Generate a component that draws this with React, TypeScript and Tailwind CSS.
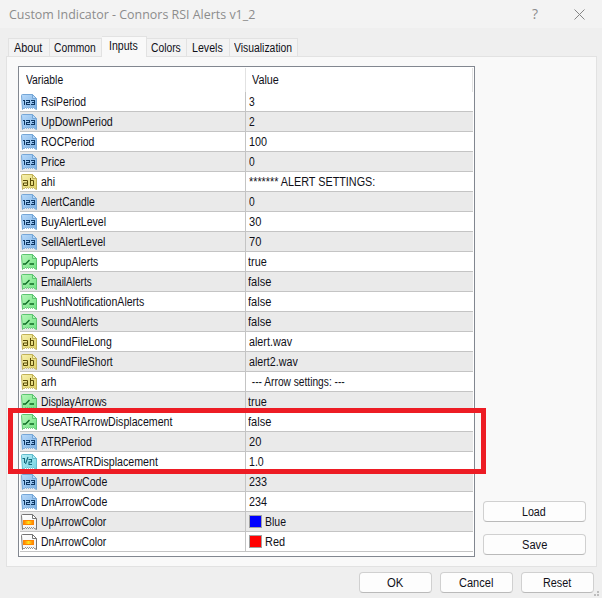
import { useLayoutEffect, useRef, useState } from "react"
import { clsx } from "clsx"

type Kind = "int" | "string" | "bool" | "double" | "color"

type Row = {
  kind: Kind
  name: string
  nameWidth: number
  value: string
  valueWidth: number
  swatch?: string
}

const rows: Row[] = [
  { kind: "int", name: "RsiPeriod", nameWidth: 45, value: "3", valueWidth: 6 },
  { kind: "int", name: "UpDownPeriod", nameWidth: 72, value: "2", valueWidth: 6 },
  { kind: "int", name: "ROCPeriod", nameWidth: 53, value: "100", valueWidth: 18 },
  { kind: "int", name: "Price", nameWidth: 24, value: "0", valueWidth: 6 },
  { kind: "string", name: "ahi", nameWidth: 14, value: "******* ALERT SETTINGS:", valueWidth: 126 },
  { kind: "int", name: "AlertCandle", nameWidth: 54, value: "0", valueWidth: 6 },
  { kind: "int", name: "BuyAlertLevel", nameWidth: 65, value: "30", valueWidth: 12 },
  { kind: "int", name: "SellAlertLevel", nameWidth: 64, value: "70", valueWidth: 12 },
  { kind: "bool", name: "PopupAlerts", nameWidth: 57, value: "true", valueWidth: 19 },
  { kind: "bool", name: "EmailAlerts", nameWidth: 51, value: "false", valueWidth: 23 },
  { kind: "bool", name: "PushNotificationAlerts", nameWidth: 103, value: "false", valueWidth: 23 },
  { kind: "bool", name: "SoundAlerts", nameWidth: 57, value: "false", valueWidth: 23 },
  { kind: "string", name: "SoundFileLong", nameWidth: 71, value: "alert.wav", valueWidth: 43 },
  { kind: "string", name: "SoundFileShort", nameWidth: 72, value: "alert2.wav", valueWidth: 49 },
  { kind: "string", name: "arh", nameWidth: 15, value: " --- Arrow settings: ---", valueWidth: 96 },
  { kind: "bool", name: "DisplayArrows", nameWidth: 66, value: "true", valueWidth: 19 },
  { kind: "bool", name: "UseATRArrowDisplacement", nameWidth: 131, value: "false", valueWidth: 23 },
  { kind: "int", name: "ATRPeriod", nameWidth: 51, value: "20", valueWidth: 12 },
  { kind: "double", name: "arrowsATRDisplacement", nameWidth: 117, value: "1.0", valueWidth: 15 },
  { kind: "int", name: "UpArrowCode", nameWidth: 66, value: "233", valueWidth: 18 },
  { kind: "int", name: "DnArrowCode", nameWidth: 66, value: "234", valueWidth: 18 },
  { kind: "color", name: "UpArrowColor", nameWidth: 65, value: "Blue", valueWidth: 21, swatch: "bg-[#0000ff]" },
  { kind: "color", name: "DnArrowColor", nameWidth: 65, value: "Red", valueWidth: 20, swatch: "bg-[#ff0000]" },
]

const tabs = [
  { label: "About", width: 28, box: "w-[42px]" },
  { label: "Common", width: 42, box: "w-[52px]" },
  { label: "Inputs", width: 29, box: "w-[45px]" },
  { label: "Colors", width: 30, box: "w-[40px]" },
  { label: "Levels", width: 31, box: "w-[43px]" },
  { label: "Visualization", width: 58, box: "w-[68px]" },
]

// Condenses the text horizontally so the label takes exactly `width` pixels
function Label({ text, width }: { text: string; width: number }) {
  const ref = useRef<HTMLSpanElement>(null)
  const [scale, setScale] = useState(1)

  useLayoutEffect(() => {
    if (ref.current) {
      setScale(width / ref.current.offsetWidth)
    }
  }, [])

  return (
    <span className="flex shrink-0" style={{ width }}>
      <span
        ref={ref}
        className="inline-block shrink-0 origin-left whitespace-pre"
        style={{ transform: `scaleX(${scale})` }}
      >
        {text}
      </span>
    </span>
  )
}

const palette = {
  int: { light: "#b9dafa", dark: "#7db1e4", line: "#75a6d6", ink: "#0c3560" },
  string: { light: "#f8f2b0", dark: "#dccf66", line: "#c0b158", ink: "#5a4c08" },
  bool: { light: "#b6f7ba", dark: "#72e082", line: "#5cc470", ink: "#0c6a22" },
  double: { light: "#b8f0f6", dark: "#74d2e2", line: "#62bccd", ink: "#12697c" },
  color: { light: "#ffffff", dark: "#f0f0f0", line: "#747474", ink: "#747474" },
}

function TypeIcon({ kind }: { kind: Kind }) {
  const c = palette[kind]
  return (
    <svg width="16" height="16" viewBox="0 0 16 16" className="mt-[2px] shrink-0">
      <defs>
        <linearGradient id={"g-" + kind} x1="0" y1="0" x2="1" y2="1">
          <stop offset="0" stopColor={c.light} />
          <stop offset="1" stopColor={c.dark} />
        </linearGradient>
        <linearGradient id="g-fire">
          <stop offset="0" stopColor="#ff7800" />
          <stop offset=".5" stopColor="#ffe21a" />
          <stop offset="1" stopColor="#ff7800" />
        </linearGradient>
      </defs>
      <path
        d="M.5 1.500q0-1 1-1h10l4 4V15.500l-2-1-1-1-1 1-1-1-1 1-1-1-1 1-1-1-1 1-1-1-1 1-1 0-1 1z"
        fill={`url(#g-${kind})`}
        stroke={c.line}
      />
      <path d="M11.500.5v4h4z" fill={c.light} stroke={c.line} />
      {kind === "int" && (
        <g fill={c.ink}>
          <path d="M2 6h2v5H3V7H2z" />
          <path d="M5 6h4v3H6v1h3v1H5V8h3V7H5z" />
          <path d="M10 6h4v5h-4v-1h3V9h-2V8h2V7h-3z" />
        </g>
      )}
      {kind === "string" && (
        <path
          d="M2 6.500h4.500v5M6.500 11.500h-4v-2.500h4M9.500 4v7.500h3v-5h-3"
          fill="none"
          stroke={c.ink}
          strokeWidth="1"
        />
      )}
      {kind === "bool" && (
        <path d="M2 10h2.500L8.500 6M8.500 10H13" fill="none" stroke={c.ink} strokeWidth="1.300" />
      )}
      {kind === "double" && (
        <path
          d="M1.500 4.500H3.500V9M7 3l-2.500 7M7.500 5.500h3v2.500h-2.500v2.500h3"
          fill="none"
          stroke={c.ink}
          strokeWidth="1.100"
        />
      )}
      {kind === "color" && (
        <rect x="2.500" y="6.500" width="10" height="4" fill="url(#g-fire)" stroke="#ff8500" />
      )}
    </svg>
  )
}

function Button({ label, width, className }: { label: string; width: number; className: string }) {
  return (
    <button
      className={clsx(
        "flex h-[21px] items-center justify-center rounded-[4px] border border-[#d0d0d0] border-b-[#bababa] bg-[#fdfdfd] pr-px",
        className,
      )}
    >
      <Label text={label} width={width} />
    </button>
  )
}

export default function App() {
  const [activeTab, setActiveTab] = useState("Inputs")

  return (
    <div className="relative h-[598px] w-[602px] overflow-hidden bg-[#efefef] font-['Liberation_Sans',sans-serif] text-[12px] leading-[16px] text-[#101018]">
      {/* Title bar */}
      <header className="flex h-[28px] items-center bg-[#f3f3f3] pl-[9px] text-[#8c8c8c]">
        <h1 className="font-['Open_Sans',sans-serif] text-[13.5px] leading-[26px]">
          <Label text="Custom Indicator - Connors RSI Alerts v1_2" width={246} />
        </h1>
        <span className="mr-[36px] ml-auto font-['Open_Sans',sans-serif] text-[14px]">?</span>
        <svg width="11" height="11" viewBox="0 0 11 11" className="mr-[17px]">
          <path d="M.5.5l10 10M10.500.5l-10 10" stroke="#858585" fill="none" />
        </svg>
      </header>

      {/* Tabs */}
      <nav className="flex h-[28px] items-end pl-[8px]">
        {tabs.map((tab) => (
          <button
            key={tab.label}
            onClick={() => setActiveTab(tab.label)}
            className={clsx(
              "flex items-center justify-center border-t border-r border-[#e2e2e2] pr-[2px]",
              tab.box,
              tab.label === "About" && "border-l",
              activeTab === tab.label
                ? "relative -mb-px h-[21px] bg-[#f9f9f9] pb-[2px]"
                : "h-[18px] bg-[#f3f3f3]",
            )}
          >
            <Label text={tab.label} width={tab.width} />
          </button>
        ))}
      </nav>

      {/* Tab page */}
      <main className="ml-[6px] flex h-[511px] w-[591px] border border-[#e2e2e2] bg-[#f9f9f9] pt-[9px] pl-[11px]">
        <section className="h-[491px] w-[457px] border border-[#828790] bg-white px-px">
          <div className="flex h-[25px] pt-px">
            <div className="flex w-[226px] items-center border-r border-[#e2e2e2] pl-[6px]">
              <Label text="Variable" width={37} />
            </div>
            <div className="flex flex-1 items-center border-r border-[#e2e2e2] pl-[6px]">
              <Label text="Value" width={27} />
            </div>
          </div>
          {rows.map((row, i) => (
            <div
              key={row.name}
              className={clsx("flex h-[20px] border-b border-[#c4c4c4]", i % 2 ? "bg-[#eaeaea]" : "bg-white")}
            >
              <div className="flex w-[226px] items-start gap-[4px] border-r border-[#c4c4c4] pl-[1px]">
                <TypeIcon kind={row.kind} />
                <div className="pt-[2px]">
                  <Label text={row.name} width={row.nameWidth} />
                </div>
              </div>
              <div
                className={clsx("flex items-start pt-[2px]", row.kind === "bool" ? "pl-[2px]" : "pl-[3px]")}
              >
                {row.swatch && (
                  <span className={clsx("mt-px mr-[3px] h-[13px] w-[13px] border border-[#a0a0a0]", row.swatch)} />
                )}
                <Label text={row.value} width={row.valueWidth} />
              </div>
            </div>
          ))}
        </section>
        <aside className="flex flex-col justify-end gap-[12px] pb-[11px] pl-[8px]">
          <Button label="Load" width={24} className="w-[103px]" />
          <Button label="Save" width={25} className="w-[103px]" />
        </aside>
      </main>

      {/* Dialog buttons */}
      <footer className="flex justify-end gap-[8px] pt-[5px] pr-[8px]">
        <Button label="OK" width={16} className="w-[73px]" />
        <Button label="Cancel" width={34} className="w-[73px]" />
        <Button label="Reset" width={28} className="w-[73px]" />
      </footer>

      {/* Resize grip */}
      <svg width="6" height="6" className="absolute right-[2px] bottom-[1px]">
        <path d="M3 0h2v2h-2zM0 3h2v2h-2zM3 3h2v2h-2z" fill="#bdbdbd" />
      </svg>

      {/* Highlight around the ATR settings */}
      <div className="pointer-events-none absolute top-[408px] left-[8px] h-[66px] w-[478px] border-[5px] border-[#ed1c24]" />
    </div>
  )
}
